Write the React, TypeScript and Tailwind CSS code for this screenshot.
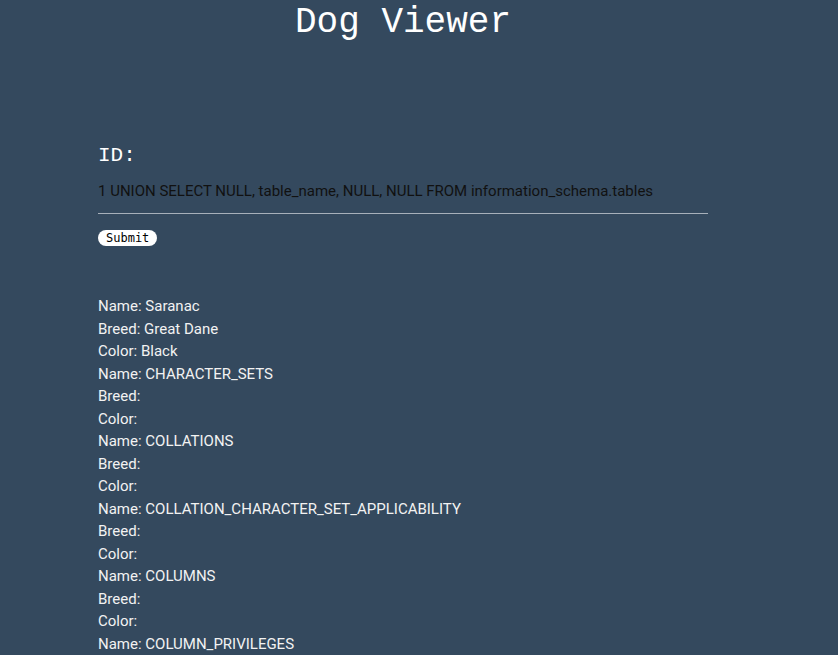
import { useState } from 'react'

const rows = [
  { name: 'Saranac', breed: 'Great Dane', color: 'Black' },
  { name: 'CHARACTER_SETS', breed: '', color: '' },
  { name: 'COLLATIONS', breed: '', color: '' },
  { name: 'COLLATION_CHARACTER_SET_APPLICABILITY', breed: '', color: '' },
  { name: 'COLUMNS', breed: '', color: '' },
  { name: 'COLUMN_PRIVILEGES', breed: '', color: '' },
]

export default function App() {
  const [id, setId] = useState('1 UNION SELECT NULL, table_name, NULL, NULL FROM information_schema.tables')

  return (
    <div className="min-h-screen bg-[#34495e] overflow-hidden h-[655px]">
      <div className="ml-[98px] w-[610px]">
        {/* Title */}
        <h1 className="text-center text-[36px] leading-[46px] text-white pt-0 font-['Liberation_Mono',monospace]">
          Dog Viewer
        </h1>

        {/* Form */}
        <div className="mt-[97px]">
          <label className="block text-[21px] leading-[26px] text-white font-['Liberation_Mono',monospace]">ID:</label>
          <input
            className="mt-[11px] w-full bg-transparent text-[15px] leading-[22px] text-[#111] pb-[11px] border-b border-[#a7b0ba] outline-none font-['Roboto',sans-serif]"
            value={id}
            onChange={e => setId(e.target.value)}
          />
          <button className="mt-[16px] block bg-white rounded-full px-[8px] h-[16px] text-[12px] leading-[16px] text-black font-['DejaVu_Sans_Mono',monospace]">
            Submit
          </button>
        </div>

        {/* Results */}
        <div className="mt-[49px] text-[15px] leading-[22.5px] text-[#f2f2f2] font-['Roboto',sans-serif]">
          {rows.map((r, i) => (
            <div key={i}>
              <div>Name: {r.name}</div>
              <div>Breed: {r.breed}</div>
              <div>Color: {r.color}</div>
            </div>
          ))}
        </div>
      </div>
    </div>
  )
}
